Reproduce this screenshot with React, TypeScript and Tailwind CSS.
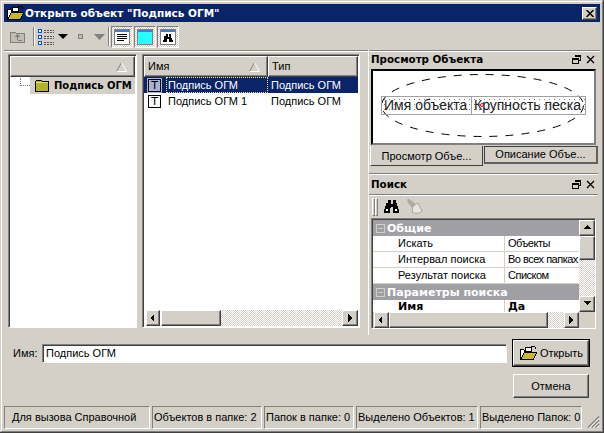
import type { ReactNode } from "react"

const raised = "border border-t-white border-l-white border-r-[#404040] border-b-[#404040] shadow-[inset_-1px_-1px_0_#808080]"
const sunken = "border border-t-[#808080] border-l-[#808080] border-r-white border-b-white shadow-[inset_1px_1px_0_#404040]"
const hatch = "bg-[repeating-conic-gradient(#ffffff_0%_25%,#d4d0c8_0%_50%)] bg-[length:2px_2px]"
const boldFont = "font-['DejaVu_Sans'] font-bold"

function Arrow({ dir }: { dir: "left" | "right" | "up" | "down" }) {
  const pts = {
    left: "5,1 1,5 5,9",
    right: "2,1 6,5 2,9",
    up: "0,6 4,2 8,6",
    down: "0,2 4,6 8,2",
  }[dir]
  return (
    <svg width="9" height="10" viewBox="0 0 9 10" shapeRendering="crispEdges">
      <polygon points={pts} fill="#000" />
    </svg>
  )
}

function ScrollBtn({ dir, className = "" }: { dir: "left" | "right" | "up" | "down"; className?: string }) {
  return (
    <div className={`${raised} bg-[#d4d0c8] flex items-center justify-center shrink-0 ${className}`}>
      <Arrow dir={dir} />
    </div>
  )
}

function ToggleBtn({ children }: { children: ReactNode }) {
  return (
    <div className={`w-[22px] h-[22px] flex items-center justify-center border border-t-[#808080] border-l-[#808080] border-r-white border-b-white ${hatch}`}>
      {children}
    </div>
  )
}

function Binoculars() {
  return (
    <svg width="16" height="14" viewBox="0 0 16 14" shapeRendering="crispEdges">
      <path d="M4 0h3v4h2V0h3v3h1v3h1v3h1v4h-6V8H9v-1H7v1H6v5H0V9h1V6h1V3h2z" fill="#000" />
      <rect x="2" y="9" width="2" height="2" fill="#fff" />
      <rect x="11" y="9" width="2" height="2" fill="#fff" />
    </svg>
  )
}

function FolderOpen() {
  return (
    <svg width="18" height="16" viewBox="0 0 18 16" shapeRendering="crispEdges">
      <path d="M1.5 4.5h3l1 1h1v-3h6v4h-7l-2 6h-2z" fill="#fff" stroke="#000" />
      <path d="M5.5 7.5h12l-3 7h-13z" fill="#c8b830" stroke="#000" />
      <path d="M12 1h3l1 1v2" fill="none" stroke="#000" />
    </svg>
  )
}

function THeaderCell({ label, width, sort }: { label: string; width: string; sort?: boolean }) {
  return (
    <div className={`${raised} ${width} h-[21px] bg-[#d4d0c8] flex items-center justify-between px-[3px] shrink-0 text-[11px]`}>
      <span>{label}</span>
      {sort && (
        <svg width="11" height="10" viewBox="0 0 11 10" className="mr-[4px]">
          <path d="M0.5 9.5L5.5 0.5" stroke="#808080" fill="none" />
          <path d="M5.5 0.5L10.5 9.5H0.5" stroke="#fff" fill="none" />
        </svg>
      )}
    </div>
  )
}

function TypeIcon({ selected }: { selected?: boolean }) {
  return (
    <div className={`w-[13px] h-[13px] border border-black flex items-center justify-center ${selected ? "bg-[#a8b4d0] shadow-[0_0_0_1px_#a8b4d0]" : "bg-white"}`}>
      <span className="text-[11px] leading-[11px] text-black font-['DejaVu_Sans']">T</span>
    </div>
  )
}

function ListRow({ name, selected }: { name: string; selected?: boolean }) {
  return (
    <div className={`flex items-center h-[16px] ${selected ? "bg-[#0a246a] text-white" : "text-black"}`}>
      <div className="w-[22px] pl-[4px] shrink-0">
        <TypeIcon selected={selected} />
      </div>
      <div className={`w-[102px] shrink-0 h-full pl-px leading-[15px] ${selected ? "border border-dotted border-[#e8e0a0]" : "border border-transparent"}`}>{name}</div>
      <div className="pl-[3px] whitespace-nowrap">Подпись ОГМ</div>
    </div>
  )
}

function PanelTitle({ title }: { title: string }) {
  return (
    <div className="flex items-center justify-between h-[19px] px-[2px] shrink-0">
      <span className={`${boldFont} text-[10.3px] leading-none`}>{title}</span>
      <div className="flex items-center gap-[5px] pr-px">
        <svg width="9" height="9" viewBox="0 0 9 9" shapeRendering="crispEdges">
          <path d="M3 0.5h5.5v5H6.5M0.5 3.5h5.5v5H0.5zM3 1.5h5M0.5 4.5h5.5" fill="none" stroke="#000" />
        </svg>
        <svg width="9" height="9" viewBox="0 0 9 9">
          <path d="M1 1l7 7M8 1l-7 7" stroke="#000" strokeWidth="1.3" />
        </svg>
      </div>
    </div>
  )
}

function GroupRow({ label }: { label: string }) {
  return (
    <div className="h-[16px] bg-[#a0a0a4] flex items-center text-white shrink-0">
      <div className="w-[9px] h-[9px] ml-[3px] mr-[2px] border border-[#d4d0c8] flex items-center justify-center">
        <div className="w-[5px] h-px bg-[#d4d0c8]" />
      </div>
      <span className={`${boldFont} text-[11px] leading-none`}>{label}</span>
    </div>
  )
}

function PropRow({ name, value, bold, short }: { name: string; value: string; bold?: boolean; short?: boolean }) {
  const leading = short ? "leading-[13px]" : "leading-[15px]"
  return (
    <div className={`${short ? "h-[13px]" : "h-[16px] border-b border-[#d4d0c8]"} flex bg-white shrink-0 overflow-hidden`}>
      <div className={`w-[132px] pl-[25px] border-r border-[#d4d0c8] shrink-0 whitespace-nowrap ${leading} ${bold ? boldFont : ""}`}>{name}</div>
      <div className={`pl-[3px] whitespace-nowrap ${leading} ${bold ? boldFont : "tracking-[-0.5px]"}`}>{value}</div>
    </div>
  )
}

function StatusPane({ width, text, pad }: { width: string; text: string; pad?: boolean }) {
  return (
    <div className={`${width} h-[23px] shrink-0 border border-t-[#808080] border-l-[#808080] border-r-white border-b-white flex items-center whitespace-nowrap overflow-hidden ${pad ? "pl-[7px]" : "pl-px"}`}>
      {text}
    </div>
  )
}

export default function App() {
  return (
    <div className="w-[604px] h-[433px] bg-[#d4d0c8] p-[4px] flex flex-col text-[11px] text-black font-['Liberation_Sans',sans-serif] overflow-hidden shadow-[inset_-1px_-1px_0_#404040,inset_1px_1px_0_#d4d0c8,inset_-2px_-2px_0_#808080,inset_2px_2px_0_#ffffff]">
      {/* Title bar */}
      <div className="h-[18px] bg-[#0a246a] flex items-center pl-[2px] pr-[3px] shrink-0">
        <FolderOpen />
        <span className={`${boldFont} text-white text-[10.5px] leading-none ml-[1px] flex-1 whitespace-nowrap`}>Открыть объект "Подпись ОГМ"</span>
        <div className={`${raised} w-[15px] h-[13px] bg-[#d4d0c8] flex items-center justify-center`}>
          <svg width="8" height="7" viewBox="0 0 8 7">
            <path d="M0.5 0l7 7M7.5 0l-7 7" stroke="#000" strokeWidth="1.5" />
          </svg>
        </div>
      </div>

      {/* Toolbar */}
      <div className="h-[28px] mt-px flex items-center pl-[6px] border-b border-[#808080] shadow-[0_1px_0_#ffffff] shrink-0">
        <svg width="15" height="13" viewBox="0 0 15 13" shapeRendering="crispEdges">
          <path d="M0.5 2.5h5l1 1h8v9H0.5z" fill="#c0bcb4" stroke="#808080" />
          <path d="M7.5 5v5M5.5 7l2-2 2 2M7.5 10h4" fill="none" stroke="#808080" />
        </svg>
        <div className="w-px h-[19px] bg-[#808080] ml-[8px] shadow-[1px_0_0_#ffffff]" />
        <svg width="17" height="16" viewBox="0 0 17 16" shapeRendering="crispEdges" className="ml-[4px]">
          <g fill="#fff" stroke="#0a50d8">
            <rect x="0.5" y="0.5" width="3" height="3" />
            <rect x="0.5" y="6.5" width="3" height="3" />
            <rect x="0.5" y="12.5" width="3" height="3" />
          </g>
          <path d="M6 1.5h10M6 3.5h10M6 7.5h10M6 9.5h10M6 13.5h10M6 15.5h10" stroke="#555" strokeDasharray="2 1" />
        </svg>
        <svg width="10" height="5" viewBox="0 0 10 5" className="ml-[3px]">
          <polygon points="0,0 10,0 5,5" fill="#000" />
        </svg>
        <div className="w-[5px] h-[5px] border border-[#808080] ml-[10px] bg-[#c0bcb4]" />
        <svg width="11" height="6" viewBox="0 0 11 6" className="ml-[11px]">
          <polygon points="0,0 11,0 5.5,6" fill="#808080" />
        </svg>
        <div className="w-px h-[19px] bg-[#808080] ml-[3px] shadow-[1px_0_0_#ffffff]" />
        <div className="flex gap-px ml-[2px]">
          <ToggleBtn>
            <svg width="16" height="16" viewBox="0 0 16 16" shapeRendering="crispEdges">
              <rect x="0.5" y="0.5" width="15" height="15" fill="#fff" stroke="#808080" />
              <rect x="1" y="1" width="14" height="2" fill="#3a7ce0" />
              <path d="M3 5.5h10M3 7.5h10M3 9.5h10M3 11.5h7" stroke="#000" />
            </svg>
          </ToggleBtn>
          <ToggleBtn>
            <svg width="16" height="16" viewBox="0 0 16 16" shapeRendering="crispEdges">
              <rect x="0.5" y="0.5" width="15" height="15" fill="#28ffff" stroke="#808080" />
              <rect x="1" y="1" width="14" height="2" fill="#3a7ce0" />
            </svg>
          </ToggleBtn>
          <ToggleBtn>
            <svg width="16" height="16" viewBox="0 0 16 16" shapeRendering="crispEdges">
              <rect x="0.5" y="0.5" width="15" height="15" fill="#fff" stroke="#808080" />
              <rect x="1" y="1" width="14" height="2" fill="#3a7ce0" />
              <g transform="translate(3 5) scale(0.65)">
                <path d="M4 0h3v4h2V0h3v3h1v3h1v3h1v4h-6V8H9v-1H7v1H6v5H0V9h1V6h1V3h2z" fill="#000" />
              </g>
            </svg>
          </ToggleBtn>
        </div>
      </div>

      {/* Main area */}
      <div className="h-[285px] flex shrink-0">
        {/* Folder tree */}
        <div className={`${sunken} w-[129px] h-[274px] ml-[4px] mt-[3px] bg-white p-px flex flex-col shrink-0`}>
          <THeaderCell label="" width="w-full" sort />
          <div className="flex items-center h-[17px] pl-[10px]">
            <div className="w-[10px] h-[8px] border-l border-b border-dotted border-[#808080] -mt-[8px] shrink-0" />
            <div className="flex-1 h-full bg-[#d4d0c8] flex items-center pl-[4px] min-w-0">
              <svg width="16" height="13" viewBox="0 0 16 13" shapeRendering="crispEdges">
                <path d="M1.5 2.5l1-1h5l1 1h6v10h-13z" fill="#b4b428" stroke="#000" />
                <path d="M2 3h12" stroke="#e8e060" />
              </svg>
              <span className={`${boldFont} ml-[4px] text-[10px] leading-none whitespace-nowrap`}>Подпись ОГМ</span>
            </div>
          </div>
        </div>

        {/* Object list */}
        <div className={`${sunken} w-[218px] h-[274px] ml-[5px] mt-[3px] bg-white p-px flex flex-col shrink-0`}>
          <div className="flex shrink-0">
            <THeaderCell label="Имя" width="w-[124px]" sort />
            <THeaderCell label="Тип" width="flex-1" />
          </div>
          <ListRow name="Подпись ОГМ" selected />
          <ListRow name="Подпись ОГМ 1" />
          <div className="flex-1" />
          <div className="flex h-[16px] shrink-0 pl-[2px]">
            <ScrollBtn dir="left" className="w-[14px]" />
            <div className={`${raised} w-[60px] ml-px bg-[#d4d0c8]`} />
            <div className={`flex-1 ${hatch}`} />
            <ScrollBtn dir="right" className="w-[16px]" />
          </div>
        </div>

        {/* Right column */}
        <div className="w-[230px] ml-[8px] -mt-px h-[285px] flex flex-col border-l border-white shrink-0">
          <PanelTitle title="Просмотр Объекта" />
          <div className="relative mx-[2px] h-[76px] bg-white border-2 border-t-black border-l-black border-r-[#808080] border-b-[#808080] flex items-center justify-center shrink-0 overflow-hidden">
            <svg className="absolute inset-0" width="222" height="72" viewBox="0 0 222 72">
              <ellipse cx="109.5" cy="34.5" rx="101" ry="31" fill="none" stroke="#000" strokeDasharray="8 8" />
            </svg>
            <div className="relative flex h-[19px] border border-[#a0a0a0] -mt-[3px] bg-[radial-gradient(#808080_0.5px,transparent_0.5px)] bg-[length:5px_5px] text-[14px] leading-[17px] text-[#222]">
              <div className="w-[90px] pl-[2px] border-r border-[#a0a0a0] whitespace-nowrap">Имя объекта</div>
              <div className="relative w-[113px] pl-[2px] whitespace-nowrap">
                Крупность песка
                <div className="absolute left-[8px] top-[6px] w-[4px] h-[4px] rounded-full border border-red-600" />
              </div>
            </div>
          </div>
          <div className="flex h-[20px] mt-px ml-px shrink-0">
            <div className="w-[113px] h-[20px] bg-[#d4d0c8] border-l border-white border-b border-b-[#404040] border-r border-r-[#404040] flex items-center justify-center pt-px">Просмотр Объе...</div>
            <div className="w-[114px] h-[18px] ml-px border border-[#404040] border-b-2 border-r-2 border-r-[#606060] border-b-[#606060] flex items-center justify-center">Описание Объе...</div>
          </div>
          <div className="h-[2px] mt-[7px] bg-[#808080] border-b border-white shrink-0" />

          <PanelTitle title="Поиск" />
          <div className="h-[24px] border-t border-[#808080] shadow-[inset_0_1px_0_#ffffff] flex items-center pl-[3px] shrink-0">
            <div className="w-[3px] h-[18px] border border-t-white border-l-white border-r-[#808080] border-b-[#808080]" />
            <div className="w-[3px] h-[18px] border border-t-white border-l-white border-r-[#808080] border-b-[#808080]" />
            <div className="ml-[6px] flex">
              <Binoculars />
            </div>
            <svg width="18" height="18" viewBox="0 0 18 18" className="ml-[6px]">
              <path d="M7 8l5-3 4 8c-3 3-7 3-10 1z" fill="#e8e4dc" stroke="#a8a49c" />
              <path d="M2 1l7 5-3 3-4-5z" fill="#b0aca4" stroke="#a8a49c" />
            </svg>
          </div>

          <div className={`${sunken} mx-[2px] h-[111px] flex flex-col bg-[#d4d0c8] pl-px pt-px shrink-0`}>
            <div className="flex flex-1 min-h-0">
              <div className="flex-1 min-w-0 flex flex-col overflow-hidden">
                <GroupRow label="Общие" />
                <PropRow name="Искать" value="Объекты" />
                <PropRow name="Интервал поиска" value="Во всех папках" />
                <PropRow name="Результат поиска" value="Списком" />
                <GroupRow label="Параметры поиска" />
                <PropRow name="Имя" value="Да" bold short />
              </div>
              <div className="w-[16px] flex flex-col shrink-0">
                <ScrollBtn dir="up" className="h-[16px]" />
                <div className={`${raised} h-[24px] bg-[#d4d0c8]`} />
                <div className={`flex-1 ${hatch}`} />
                <ScrollBtn dir="down" className="h-[16px]" />
              </div>
            </div>
            <div className="flex h-[16px] pr-[16px] pl-px shrink-0">
              <ScrollBtn dir="left" className="w-[15px]" />
              <div className={`${raised} w-[159px] bg-[#d4d0c8]`} />
              <div className={`flex-1 ${hatch}`} />
              <ScrollBtn dir="right" className="w-[15px]" />
            </div>
          </div>
        </div>
      </div>

      {/* Name row + buttons */}
      <div className="flex pl-[9px] pr-[10px] shrink-0 h-[66px]">
        <div className="flex items-start mt-[8px] flex-1">
          <span className="w-[29px] leading-[18px] shrink-0">Имя:</span>
          <div className={`${sunken} w-[465px] h-[19px] bg-white pl-[3px] leading-[17px]`}>Подпись ОГМ</div>
        </div>
        <div className="w-[78px] flex flex-col shrink-0 mt-[3px]">
          <div className="h-[28px] border border-black">
            <div className={`${raised} h-full flex items-center justify-center gap-[3px] bg-[#d4d0c8]`}>
              <FolderOpen />
              <span>Открыть</span>
            </div>
          </div>
          <div className={`${raised} h-[24px] mt-[7px] mx-px flex items-center justify-center`}>Отмена</div>
        </div>
      </div>

      {/* Status bar */}
      <div className="flex items-start gap-[2px] h-[25px] mt-[4px] shrink-0">
        <StatusPane width="w-[146px]" text="Для вызова Справочной" pad />
        <StatusPane width="w-[110px]" text="Объектов в папке: 2" />
        <StatusPane width="w-[90px]" text="Папок в папке: 0" />
        <StatusPane width="w-[122px]" text="Выделено Объектов: 1" />
        <StatusPane width="w-[102px]" text="Выделено Папок: 0" />
        <svg width="14" height="14" viewBox="0 0 14 14" className="mt-[9px] ml-[3px]">
          <path d="M13 1L1 13M13 5L5 13M13 9L9 13" stroke="#808080" strokeWidth="1.5" />
          <path d="M13 3L3 13M13 7L7 13M13 11L11 13" stroke="#fff" />
        </svg>
      </div>
    </div>
  )
}
